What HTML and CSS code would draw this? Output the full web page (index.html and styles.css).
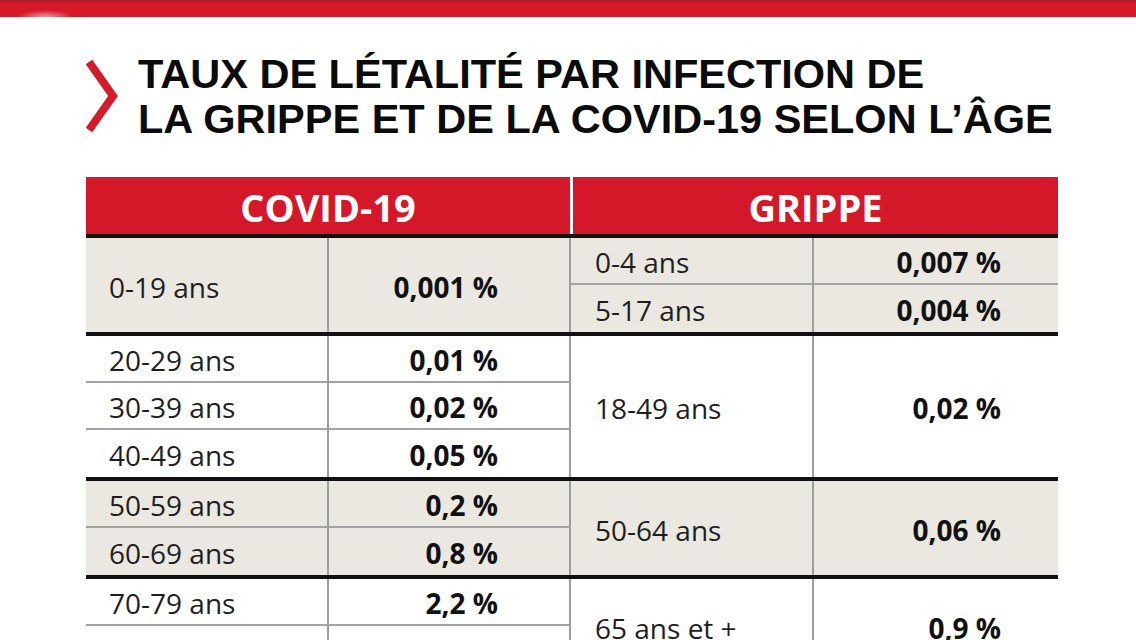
FILE: index.html
```html
<!DOCTYPE html>
<html lang="fr">
<head>
<meta charset="utf-8">
<title>Taux de létalité par infection</title>
<link rel="stylesheet" href="styles.css">
</head>
<body>
<div class="topbar"></div>
<header class="title-row">
  <svg class="chev" width="36" height="76" viewBox="0 0 36 76" aria-hidden="true">
    <polyline points="5,4 29,38 5,72" fill="none" stroke="#d51a2b" stroke-width="8" stroke-linejoin="miter" stroke-miterlimit="10"/>
  </svg>
  <h1 class="title">TAUX DE LÉTALITÉ PAR INFECTION DE<br>LA GRIPPE ET DE LA COVID-19 SELON L’ÂGE</h1>
</header>
<section class="table">
  <div class="thead">
    <div class="th">COVID-19</div>
    <div class="th">GRIPPE</div>
  </div>
  <div class="group beige">
    <div class="cell age span2">0-19 ans</div>
    <div class="cell val l span2">0,001 %</div>
    <div class="cell age r sep">0-4 ans</div>
    <div class="cell val r sep">0,007 %</div>
    <div class="cell age r">5-17 ans</div>
    <div class="cell val r">0,004 %</div>
  </div>
  <div class="group">
    <div class="cell age sep">20-29 ans</div>
    <div class="cell val l sep">0,01 %</div>
    <div class="cell age r span3">18-49 ans</div>
    <div class="cell val r span3">0,02 %</div>
    <div class="cell age sep">30-39 ans</div>
    <div class="cell val l sep">0,02 %</div>
    <div class="cell age">40-49 ans</div>
    <div class="cell val l">0,05 %</div>
  </div>
  <div class="group beige">
    <div class="cell age sep">50-59 ans</div>
    <div class="cell val l sep">0,2 %</div>
    <div class="cell age r span2">50-64 ans</div>
    <div class="cell val r span2">0,06 %</div>
    <div class="cell age">60-69 ans</div>
    <div class="cell val l">0,8 %</div>
  </div>
  <div class="group">
    <div class="cell age sep">70-79 ans</div>
    <div class="cell val l sep">2,2 %</div>
    <div class="cell age r span2">65 ans et +</div>
    <div class="cell val r span2">0,9 %</div>
    <div class="cell age">80 ans et +</div>
    <div class="cell val l">7,3 %</div>
  </div>
</section>
</body>
</html>
```
FILE: styles.css
```css
html, body {
  margin: 0;
  padding: 0;
  background: #ffffff;
}

body {
  font-family: "Open Sans", "Liberation Sans", sans-serif;
  width: 1136px;
  height: 640px;
  overflow: hidden;
}

.topbar {
  height: 17px;
  box-sizing: border-box;
  border-top: 2px solid #a8202a;
  background:
    radial-gradient(ellipse 28px 7px at 45px 15px, rgba(255, 255, 255, 0.55), rgba(255, 255, 255, 0) 100%),
    #d6192a;
}

.title-row {
  display: flex;
  align-items: center;
  gap: 18px;
  margin: 34px 0 0 84px;
}

.chev {
  flex: none;
  display: block;
}

.title {
  margin: 0;
  font-family: "Liberation Sans", Arial, sans-serif;
  font-weight: 700;
  font-size: 41.5px;
  line-height: 45px;
  color: #0b0b0b;
}

.table {
  margin: 36px 0 0 86px;
  width: 972px;
}

.thead {
  display: grid;
  grid-template-columns: 484px 485px;
  column-gap: 3px;
  border-bottom: 4px solid #111111;
}

.th {
  height: 57px;
  box-sizing: border-box;
  padding-top: 3px;
  background: #d4182a;
  color: #ffffff;
  display: flex;
  align-items: center;
  justify-content: center;
  font-weight: 700;
  font-size: 38px;
}

.group {
  display: grid;
  grid-template-columns: 243px 242px 243px 244px;
  grid-auto-rows: 47px;
  border-bottom: 4px solid #111111;
}

.beige {
  background: #ebe7e1;
}

.cell {
  display: flex;
  align-items: center;
  box-sizing: border-box;
  padding-top: 3px;
  font-size: 28px;
  color: #1e1e1e;
  white-space: nowrap;
}

.age {
  padding-left: 23px;
  border-right: 2px solid #9d9d9d;
}

.age.r {
  padding-left: 24px;
}

.val {
  justify-content: flex-end;
  font-weight: 700;
  color: #111111;
}

.val.l {
  padding-right: 71px;
  border-right: 2px solid #9d9d9d;
}

.val.r {
  padding-right: 57px;
}

.sep {
  border-bottom: 2px solid #a3a3a3;
}

.span2 {
  grid-row: span 2;
}

.span3 {
  grid-row: span 3;
}
```
